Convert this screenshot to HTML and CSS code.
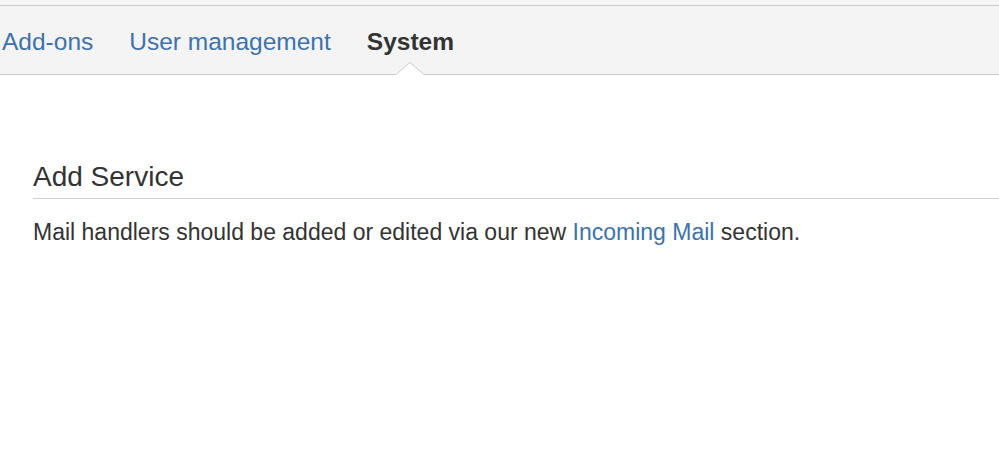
FILE: index.html
```html
<!DOCTYPE html>
<html>
<head>
<meta charset="utf-8">
<link rel="stylesheet" href="styles.css">
</head>
<body>
<div class="topstrip"></div>
<nav class="tabs">
  <a class="tab" href="#">Add-ons</a>
  <a class="tab" href="#">User management</a>
  <a class="tab active" href="#">System</a>
</nav>
<main class="content">
  <h2 class="title">Add Service</h2>
  <p class="desc">Mail handlers should be added or edited via our new <a href="#">Incoming Mail</a> section.</p>
</main>
</body>
</html>
```
FILE: styles.css
```css
html, body {
  margin: 0;
  padding: 0;
  background: #fff;
  font-family: "Liberation Sans", Arial, sans-serif;
  color: #333;
}
.topstrip {
  height: 5px;
  background: #f5f5f5;
  border-bottom: 1px solid #c9c9c9;
}
.tabs {
  display: flex;
  gap: 36px;
  background: #f4f4f4;
  border-bottom: 1px solid #c9c9c9;
  padding: 21px 0 17px 2px;
  height: 30px;
}
.tab {
  position: relative;
  font-size: 24.5px;
  line-height: 30px;
  color: #3b73af;
  text-decoration: none;
}
.tab.active {
  color: #333;
  font-weight: bold;
}
.tab.active::before,
.tab.active::after {
  content: "";
  position: absolute;
  left: 50%;
  width: 0;
  height: 0;
  border-style: solid;
}
.tab.active::before {
  bottom: -18px;
  margin-left: -15px;
  border-width: 0 15px 13px 15px;
  border-color: transparent transparent #c9c9c9 transparent;
}
.tab.active::after {
  bottom: -18px;
  margin-left: -14px;
  border-width: 0 14px 12px 14px;
  border-color: transparent transparent #fff transparent;
}
.content {
  padding: 0 0 0 33px;
}
.title {
  margin: 85px 0 0 0;
  font-size: 28px;
  line-height: 34px;
  font-weight: normal;
  color: #333;
  padding-bottom: 4px;
  border-bottom: 1px solid #d0d0d0;
}
.desc {
  margin: 19px 0 0 0;
  font-size: 23px;
  line-height: 28px;
}
.desc a {
  color: #3b73af;
  text-decoration: none;
}
```
